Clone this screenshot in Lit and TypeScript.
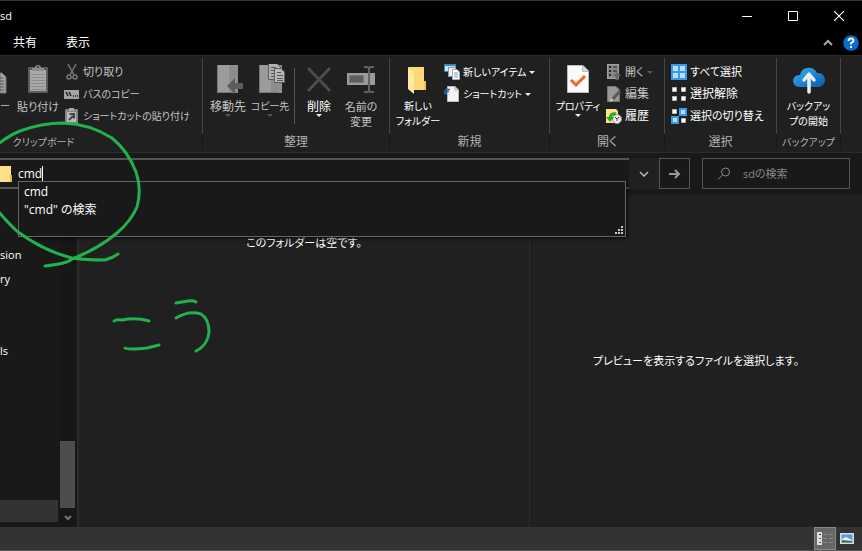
import { LitElement, html, css, nothing, type TemplateResult } from "lit";
import { customElement, state } from "lit/decorators.js";

const icons: Record<string, TemplateResult> = {
  copyCut: html`<svg width="8" height="32" viewBox="0 0 8 32">
    <path d="M0 9H2L6 13V29H0Z" fill="#a2a2a2" stroke="#777"/>
    <path d="M0 14H3M0 17H4M0 20H4M0 23H4M0 26H4" stroke="#555"/></svg>`,
  paste: html`<svg width="32" height="32" viewBox="0 0 32 32">
    <rect x="6" y="3" width="20" height="26" rx="1" fill="#5c5c5c"/>
    <rect x="8" y="6" width="16" height="21" fill="#a9a9a9"/>
    <path d="M9 10.500H23M9 13.500H23M9 16.500H23M9 19.500H23M9 22.500H23M9 25.500H23" stroke="#8c8c8c"/>
    <path d="M10 7V4H13Q13 1 16 1Q19 1 19 4H22V7Z" fill="#8b8b8b"/><circle cx="16" cy="3" r="1" fill="#333"/></svg>`,
  moveTo: html`<svg width="32" height="32" viewBox="0 0 32 32">
    <path d="M5 1H26V29H5Z" fill="#8d8d8d"/><path d="M5 1H17V29H5Z" fill="#9b9b9b"/><path d="M5.500 1V28.500H24" fill="none" stroke="#777"/>
    <path d="M15 22L23 14V19H31V25H23V30Z" fill="#5d5d5d"/></svg>`,
  copyTo: html`<svg width="32" height="32" viewBox="0 0 32 32">
    <path d="M5 1H28V29H5Z" fill="#8d8d8d"/><path d="M5 1H17V29H5Z" fill="#9b9b9b"/><path d="M5.500 1V28.500H24" fill="none" stroke="#777"/>
    <path d="M14.500 -0.500H23L26.500 3V15.500H14.500Z" fill="#b0b0b0" stroke="#5d5d5d"/>
    <path d="M17 3.500H22M17 6.500H22M17 9.500H22M17 12.500H22" stroke="#555"/>
    <path d="M20.500 4.500H27L30.500 8V18.500H20.500Z" fill="#b8b8b8" stroke="#5d5d5d"/>
    <path d="M23 8.500H27M23 11.500H29M23 14.500H29M23 16.500H29" stroke="#555"/></svg>`,
  remove: html`<svg width="32" height="32" viewBox="0 0 32 32"><path d="M5 4L27 27M27 4L5 27" stroke="#4c4c4c" stroke-width="3"/></svg>`,
  rename: html`<svg width="32" height="32" viewBox="0 0 32 32">
    <rect x="2" y="9" width="28" height="12" fill="#9a9a9a"/><rect x="4.500" y="11.500" width="14" height="7" fill="#5e5e5e" stroke="#777"/>
    <path d="M19 3H22Q24 3 24 6Q24 3 26 3H29M24 4V26M19 28H22Q24 28 24 25Q24 28 26 28H29" fill="none" stroke="#626262" stroke-width="2"/></svg>`,
  folder: html`<svg width="32" height="32" viewBox="0 0 32 32">
    <path d="M6 3H22V17H24V26H11V8Z" fill="#fbd978"/>
    <path d="M6 3L12 8V30L6 25Z" fill="#ffe9a0"/><path d="M22 17H24V26H22Z" fill="#ecc45a"/></svg>`,
  props: html`<svg width="32" height="32" viewBox="0 0 32 32">
    <path d="M5.500 1.500H21L26.500 7V28.500H5.500Z" fill="#fafafa" stroke="#bbb"/><path d="M20.500 2V7.500H26" fill="#ddd" stroke="#bbb"/>
    <path d="M9 16L14 21L23 12" fill="none" stroke="#f2661f" stroke-width="3"/></svg>`,
  cloud: html`<svg width="36" height="32" viewBox="0 0 36 32">
    <defs><linearGradient id="c" x1="0" y1="0" x2="1" y2="1"><stop offset="0" stop-color="#36b5ee"/><stop offset="1" stop-color="#0a57b0"/></linearGradient></defs>
    <path d="M8 23A6 6 0 0 1 8 11H9A9 9 0 0 1 26 9A7 7 0 0 1 28 23Z" fill="url(#c)"/>
    <path d="M18 28V12M13 16L18 10L23 16" fill="none" stroke="#e9eef3" stroke-width="3.500" stroke-linecap="round" stroke-linejoin="round"/></svg>`,
  cut: html`<svg width="16" height="16" viewBox="0 0 16 16"><path d="M4 0L10 11M12 0L6 11" stroke="#777" stroke-width="1.500"/>
    <circle cx="5" cy="13" r="2" fill="none" stroke="#777" stroke-width="1.500"/><circle cx="11" cy="13" r="2" fill="none" stroke="#777" stroke-width="1.500"/></svg>`,
  path: html`<svg width="16" height="16" viewBox="0 0 16 16"><rect x="0" y="4" width="15" height="9" fill="#a3a3a3"/>
    <path d="M2 6L4 10M5 6L7 10M9 10H10M11 10H12M13 10H14" stroke="#222" stroke-width="1.500"/></svg>`,
  pasteLink: html`<svg width="16" height="16" viewBox="0 0 16 16"><rect x="1" y="1" width="13" height="15" rx="1" fill="#858585"/>
    <rect x="5" y="0" width="5" height="3" fill="#aaa"/><rect x="3" y="4" width="9" height="10" fill="#bbb"/>
    <path d="M5 12L9 8M5.500 6H10V10.500" fill="none" stroke="#444" stroke-width="2"/></svg>`,
  newItem: html`<svg width="16" height="16" viewBox="0 0 16 16"><rect x="0.500" y="0.500" width="11" height="7" fill="#cfe4f2" stroke="#3a86b8"/>
    <path d="M0 1H12" stroke="#3a86b8" stroke-width="2"/><rect x="4.500" y="3.500" width="7" height="9" fill="#eee" stroke="#8e9aa5"/>
    <path d="M8.500 5.500H13L15.500 8V15.500H8.500Z" fill="#fff" stroke="#aaa"/><path d="M10 9H14M10 11H14M10 13H14" stroke="#7aa3d4"/></svg>`,
  shortcut: html`<svg width="16" height="16" viewBox="0 0 16 16"><path d="M3.500 0.500H11L14.500 4V15.500H3.500Z" fill="#f4f4f4" stroke="#b8b8b8"/>
    <path d="M11 0V4H15" fill="none" stroke="#aaa"/><path d="M1 3.500H6M0 5.500H5M0 7.500H3" stroke="#1e6dbd" stroke-width="1.500"/></svg>`,
  open: html`<svg width="16" height="16" viewBox="0 0 16 16"><rect x="1.500" y="0.500" width="11" height="14" fill="#888" stroke="#a2a2a2"/>
    <path d="M3 3H5M3 7H5M3 11H5" stroke="#222" stroke-width="2"/><path d="M7 3H11M7 7H11" stroke="#555" stroke-width="2"/>
    <path d="M7 12L11 8L15 12H12.500V16H9.500V12Z" fill="#666"/></svg>`,
  edit: html`<svg width="16" height="16" viewBox="0 0 16 16"><path d="M1.500 0.500H10L13.500 4V15.500H1.500Z" fill="#989898" stroke="#777"/>
    <path d="M6 14L14 5" stroke="#585858" stroke-width="3"/><path d="M4 16L5 12L8 14Z" fill="#ccc"/></svg>`,
  history: html`<svg width="16" height="16" viewBox="0 0 16 16"><path d="M0 1H10L12 3V15H0Z" fill="#ffe28a"/>
    <circle cx="11" cy="11" r="4.500" fill="#eee" stroke="#999"/><path d="M9 9L11 11L13 9M11 11V13" fill="none" stroke="#444"/>
    <path d="M10 6Q5 5 4 10" fill="none" stroke="#28a828" stroke-width="3"/><path d="M0 9H8L4 14Z" fill="#28a828"/></svg>`,
  all: html`<svg width="16" height="16" viewBox="0 0 16 16"><rect width="16" height="16" fill="#3a9ce8"/>
    <path d="M2 2H7V7H2ZM9 2H14V7H9ZM2 9H7V14H2ZM9 9H14V14H9Z" fill="#b5dcfa"/></svg>`,
  none: html`<svg width="16" height="16" viewBox="0 0 16 16">
    <path d="M1.500 1.500H5.500V5.500H1.500ZM10.500 1.500H14.500V5.500H10.500ZM1.500 10.500H5.500V14.500H1.500ZM10.500 10.500H14.500V14.500H10.500Z" fill="#fff" stroke="#bbb"/></svg>`,
  invert: html`<svg width="16" height="16" viewBox="0 0 16 16"><path d="M1.500 1.500H5.500V5.500H1.500ZM10.500 10.500H14.500V14.500H10.500Z" fill="#fff" stroke="#bbb"/>
    <path d="M9 1H15V7H9ZM1 9H7V15H1Z" fill="#b5dcfa" stroke="#3a9ce8" stroke-width="2"/></svg>`,
};

/* Kanji labels are set at 12px, mixed ones at 11px, kana ones at 10px. */
type Size = "mixed" | "kana";

interface Command {
  icon: string;
  lines: string[];
  size?: Size;
  drop?: boolean;
  dim?: boolean;
}
interface Group {
  name: string;
  label: string;
  size?: Size;
  large: (Command | "rule")[];
  small: Command[];
}

const groups: Group[] = [
  {
    name: "clip", label: "クリップボード", size: "kana",
    large: [
      { icon: "copyCut", lines: ["ー"], size: "kana", dim: true },
      { icon: "paste", lines: ["貼り付け"], size: "mixed", dim: true },
    ],
    small: [
      { icon: "cut", lines: ["切り取り"], size: "mixed", dim: true },
      { icon: "path", lines: ["パスのコピー"], size: "kana", dim: true },
      { icon: "pasteLink", lines: ["ショートカットの貼り付け"], size: "kana", dim: true },
    ],
  },
  {
    name: "organize", label: "整理",
    large: [
      { icon: "moveTo", lines: ["移動先"], drop: true, dim: true },
      { icon: "copyTo", lines: ["コピー先"], size: "kana", drop: true, dim: true },
      "rule",
      { icon: "remove", lines: ["削除"], drop: true },
      { icon: "rename", lines: ["名前の", "変更"], size: "mixed", dim: true },
    ],
    small: [],
  },
  {
    name: "create", label: "新規",
    large: [{ icon: "folder", lines: ["新しい", "フォルダー"], size: "kana" }],
    small: [
      { icon: "newItem", lines: ["新しいアイテム"], size: "kana", drop: true },
      { icon: "shortcut", lines: ["ショートカット"], size: "kana", drop: true },
    ],
  },
  {
    name: "open", label: "開く",
    large: [{ icon: "props", lines: ["プロパティ"], size: "kana", drop: true }],
    small: [
      { icon: "open", lines: ["開く"], size: "mixed", drop: true, dim: true },
      { icon: "edit", lines: ["編集"], dim: true },
      { icon: "history", lines: ["履歴"] },
    ],
  },
  {
    name: "select", label: "選択", large: [],
    small: [
      { icon: "all", lines: ["すべて選択"], size: "mixed" },
      { icon: "none", lines: ["選択解除"] },
      { icon: "invert", lines: ["選択の切り替え"], size: "mixed" },
    ],
  },
  {
    name: "backup", label: "バックアップ", size: "kana",
    large: [{ icon: "cloud", lines: ["バックアッ", "プの開始"], size: "kana" }],
    small: [],
  },
];

@customElement("app-root")
export class AppRoot extends LitElement {
  @state() private query = "cmd";

  static styles = css`
    :host {
      display: flex; flex-direction: column; position: relative; min-height: 100vh;
      box-sizing: border-box; overflow: hidden; background: #202020; color: #fff;
      border-top: 1px solid #333; border-bottom: 1px solid #555;
      font: 12px/16px "Open Sans", "Noto Sans CJK JP", sans-serif;
      font-feature-settings: "palt";
    }
    * { box-sizing: border-box; }
    svg { display: block; flex: none; }
    button { font: inherit; font-feature-settings: inherit; color: inherit; background: none; border: 0; padding: 0; white-space: nowrap; }
    input { font: inherit; font-feature-settings: inherit; color: inherit; background: none; border: 0; padding: 0; outline: 0; min-width: 0; }
    .mixed { font-size: 11px; }
    .kana { font-size: 10px; }

    .title { display: flex; height: 29px; background: #000; align-items: center; }
    .title h1 { flex: 1; margin: 0; font-size: 11px; font-weight: 400; }
    .win { width: 46px; height: 29px; display: grid; place-items: center; }
    .tabs { display: flex; height: 25px; background: #000; align-items: center; gap: 3px; padding-right: 1px; }
    .tab { padding: 0 13px; height: 25px; }
    .fill { flex: 1; }
    .tool { width: 20px; display: grid; place-items: center; }

    .ribbon { display: flex; height: 98px; border-top: 1px solid #2b2b2b; border-bottom: 1px solid #2d2d2d; padding: 2px 0; }
    .group { display: flex; flex-direction: column; flex: none; border-right: 1px solid #181818; }
    .clip { width: 203px; }
    .organize { width: 187px; }
    .create { width: 160px; }
    .open { width: 115px; }
    .select { width: 112px; }
    .backup { width: 64px; }
    .commands { display: flex; height: 76px; padding: 3px 0 0 4px; border-right: 1px solid #444; margin-right: -1px; }
    .clip .commands { padding-left: 0; }
    .backup .commands { padding-left: 0; justify-content: center; }
    .label { text-align: center; color: #b0b0b0; line-height: 16px; white-space: nowrap; }
    .clip .label { padding-right: 115px; }
    .large { width: 42px; flex: none; display: flex; flex-direction: column; align-items: center; line-height: 15px; padding-top: 3px; }
    .large .text { margin-top: 3px; }
    .clip .large { width: 48px; }
    .clip .large:first-child { width: 14px; align-items: flex-start; }
    .create .large, .open .large, .backup .large { width: 48px; }
    .rule { width: 1px; height: 56px; margin: 7px 3px; background: #555; }
    .small { display: flex; flex-direction: column; flex: none; padding-left: 2px; }
    .open .small { padding-left: 4px; }
    .row { display: flex; align-items: center; gap: 3px; height: 22px; }
    .text { display: block; }
    .line { display: block; height: 15px; }
    .dim { color: #c4c4c4; }
    .drop { border: 3px solid transparent; border-top-color: #eee; border-bottom: 0; }
    .dim .drop { border-top-color: #555; }

    .nav { display: grid; grid-template-columns: 1fr 30px 31px 160px; padding: 5px 12px 6px 0; background: #191919; }
    .address { position: relative; display: flex; align-items: center; height: 31px; border: solid #555; border-width: 2px 0; }
    .query { field-sizing: content; margin-left: 5px; }
    .caret { width: 1px; height: 15px; background: #fff; }
    .recent { background: #202020; display: grid; place-items: center; }
    .go { border: 1px solid #555; display: grid; place-items: center; }
    .search { margin-left: 12px; border: 1px solid #555; display: flex; align-items: center; gap: 12px; padding-left: 14px; }
    .search input { flex: 1; font-size: 11px; }
    .search input::placeholder { color: #888; opacity: 1; }
    .menu { position: absolute; left: 18px; right: 3px; top: 21px; height: 56px; z-index: 2; border: 1px solid #666; background: #191919; box-shadow: 2px 2px 3px #0008; padding: 1px 5px; }
    .option { display: block; height: 18px; line-height: 18px; }
    .grip { position: absolute; right: 2px; bottom: 2px; }

    .body { flex: 1; display: grid; grid-template-columns: 59px 18px 1fr minmax(200px, 332px); }
    .tree { background: #191919; display: flex; flex-direction: column; padding: 48px 0 5px; font-size: 11px; }
    .node { height: 24px; line-height: 24px; }
    .node a { color: inherit; text-decoration: none; }
    .gap { height: 48px; }
    .picked { height: 22px; background: #333; margin-top: auto; margin-right: 1px; }
    .scroll { background: #171717; display: flex; flex-direction: column; justify-content: flex-end; padding: 0 2px 6px 1px; }
    .thumb { height: 67px; background: #4d4d4d; margin-bottom: 7px; }
    .scroll svg { margin: 0 auto; }
    .files { border-left: 2px solid #2b2b2b; border-right: 1px solid #2d2d2d; padding-top: 40px; text-align: center; }
    .preview { display: grid; place-items: center; }
    p { margin: 0; }

    .status { display: flex; justify-content: flex-end; height: 23px; background: #333; padding-right: 4px; }
    .view { width: 22px; height: 23px; display: grid; place-items: center; }
    .view.on { background: #666; border: 1px solid #888; }
    .ink { position: absolute; left: 0; top: -1px; z-index: 3; pointer-events: none; }
  `;

  private big(c: Command | "rule") {
    if (c === "rule") return html`<span class="rule"></span>`;
    return html`<button class="large ${c.dim ? "dim" : ""}">
      ${icons[c.icon]}
      <span class="text ${c.size ?? ""}">${c.lines.map((l) => html`<span class="line">${l}</span>`)}</span>
      ${c.drop ? html`<span class="drop"></span>` : nothing}
    </button>`;
  }

  private row(c: Command) {
    return html`<button class="row ${c.dim ? "dim" : ""}">
      ${icons[c.icon]}<span class="text ${c.size ?? ""}">${c.lines[0]}</span>
      ${c.drop ? html`<span class="drop"></span>` : nothing}
    </button>`;
  }

  render() {
    return html`
      <header class="title">
        <h1>sd</h1>
        <button class="win" aria-label="最小化"><svg width="10" height="10"><path d="M0 5.500H10" stroke="#fff"/></svg></button>
        <button class="win" aria-label="最大化"><svg width="10" height="10"><path d="M.5 .5H9.500V9.500H.5Z" fill="none" stroke="#fff"/></svg></button>
        <button class="win" aria-label="閉じる"><svg width="10" height="10"><path d="M0 0L10 10M10 0L0 10" stroke="#fff" stroke-width="1.200"/></svg></button>
      </header>
      <nav class="tabs">
        <button class="tab">共有</button><button class="tab">表示</button>
        <span class="fill"></span>
        <button class="tool" aria-label="リボンの最小化"><svg width="10" height="8"><path d="M1 6L5 2L9 6" fill="none" stroke="#aaa" stroke-width="2"/></svg></button>
        <button class="tool" aria-label="ヘルプ"><svg width="16" height="16" viewBox="0 0 16 16"><circle cx="8" cy="8" r="7.800" fill="#0a6ccc"/><path d="M5.500 6Q5.500 3.500 8 3.500Q10.500 3.500 10.500 5.500Q10.500 7 8 8V9.500M8 11V13" fill="none" stroke="#fff" stroke-width="1.800"/></svg></button>
      </nav>
      <section class="ribbon">
        ${groups.map((g) => html`<div class="group ${g.name}">
          <div class="commands">
            ${g.large.map((c) => this.big(c))}
            ${g.small.length ? html`<div class="small">${g.small.map((c) => this.row(c))}</div>` : nothing}
          </div>
          <div class="label ${g.size ?? ""}">${g.label}</div>
        </div>`)}
      </section>
      <section class="nav">
        <div class="address">
          <svg width="13" height="16" viewBox="0 0 13 16"><path d="M0 0H11V10H12V16H0Z" fill="#ffe08a"/><path d="M10 9H12V16H10Z" fill="#e5b93c"/></svg>
          <input class="query" aria-label="アドレス" .value=${this.query} @input=${(e: Event) => (this.query = (e.target as HTMLInputElement).value)} />
          <span class="caret"></span>
          <div class="menu" role="listbox">
            <span class="option" role="option">${this.query}</span>
            <span class="option" role="option">"${this.query}" の検索</span>
            <svg class="grip" width="8" height="8"><path d="M6 0H8V2H6ZM3 3H5V5H3ZM6 3H8V5H6ZM0 6H2V8H0ZM3 6H5V8H3ZM6 6H8V8H6Z" fill="#ccc"/></svg>
          </div>
        </div>
        <button class="recent" aria-label="以前の場所"><svg width="10" height="6"><path d="M1 1L5 5L9 1" fill="none" stroke="#bbb" stroke-width="1.500"/></svg></button>
        <button class="go" aria-label="移動"><svg width="12" height="10"><path d="M0 5H10M6 1L10 5L6 9" fill="none" stroke="#999" stroke-width="2"/></svg></button>
        <label class="search"><svg width="14" height="14"><circle cx="8.500" cy="5" r="4" fill="none" stroke="#888"/><path d="M5.500 8L1 12.500" stroke="#888"/></svg>
          <input placeholder="sdの検索" aria-label="sdの検索" /></label>
      </section>
      <main class="body">
        <aside class="tree">
          <div class="node"><a href="#sion">sion</a></div>
          <div class="node"><a href="#ry">ry</a></div>
          <div class="gap"></div>
          <div class="node"><a href="#ls">ls</a></div>
          <div class="picked"></div>
        </aside>
        <div class="scroll"><div class="thumb"></div><svg width="8" height="6"><path d="M1 1L4 4L7 1" fill="none" stroke="#777" stroke-width="2"/></svg></div>
        <section class="files"><p class="mixed">このフォルダーは空です。</p></section>
        <section class="preview"><p class="mixed">プレビューを表示するファイルを選択します。</p></section>
      </main>
      <footer class="status">
        <button class="view on" aria-label="詳細"><svg width="16" height="13"><path d="M0 0H5V13H0Z" fill="#ddd"/><path d="M2 2.500H4" stroke="#333"/><path d="M2 6.500H4" stroke="#36f"/><path d="M2 10.500H4" stroke="#e11"/><path d="M6 2.500H10M12 2.500H16M6 6.500H10M12 6.500H16M6 10.500H10M12 10.500H16" stroke="#888"/></svg></button>
        <button class="view" aria-label="大アイコン"><svg width="14" height="11"><rect width="14" height="11" fill="#ddd"/><rect x="1.500" y="1.500" width="11" height="8" fill="#5b9be0"/><path d="M2 6L6 4L12 7V9H2Z" fill="#e8f1f8"/><path d="M2 7L12 8V9.500H2Z" fill="#35704c"/></svg></button>
      </footer>
      <svg class="ink" width="220" height="360" fill="none" stroke="#22b14c" stroke-width="3" stroke-linecap="round" stroke-linejoin="round">
        <path d="M-2 144Q10 135 20 131Q42 123 63 123Q90 124 112 138Q128 151 136 172Q142 189 137 207Q131 221 117 233Q98 249 72 259Q66 264 45 266"/>
        <path d="M-2 211Q9 224 18 232Q44 251 72 258Q86 260 105 260L113 257L118 254"/>
        <path d="M114 321Q116 319 122 320Q136 317 149 321M125 348Q127 350 147 348L159 345M176 303L188 301Q194 300 196 302M176 318Q189 310 201 314Q209 319 209 332Q208 345 196 351"/>
      </svg>
    `;
  }
}
